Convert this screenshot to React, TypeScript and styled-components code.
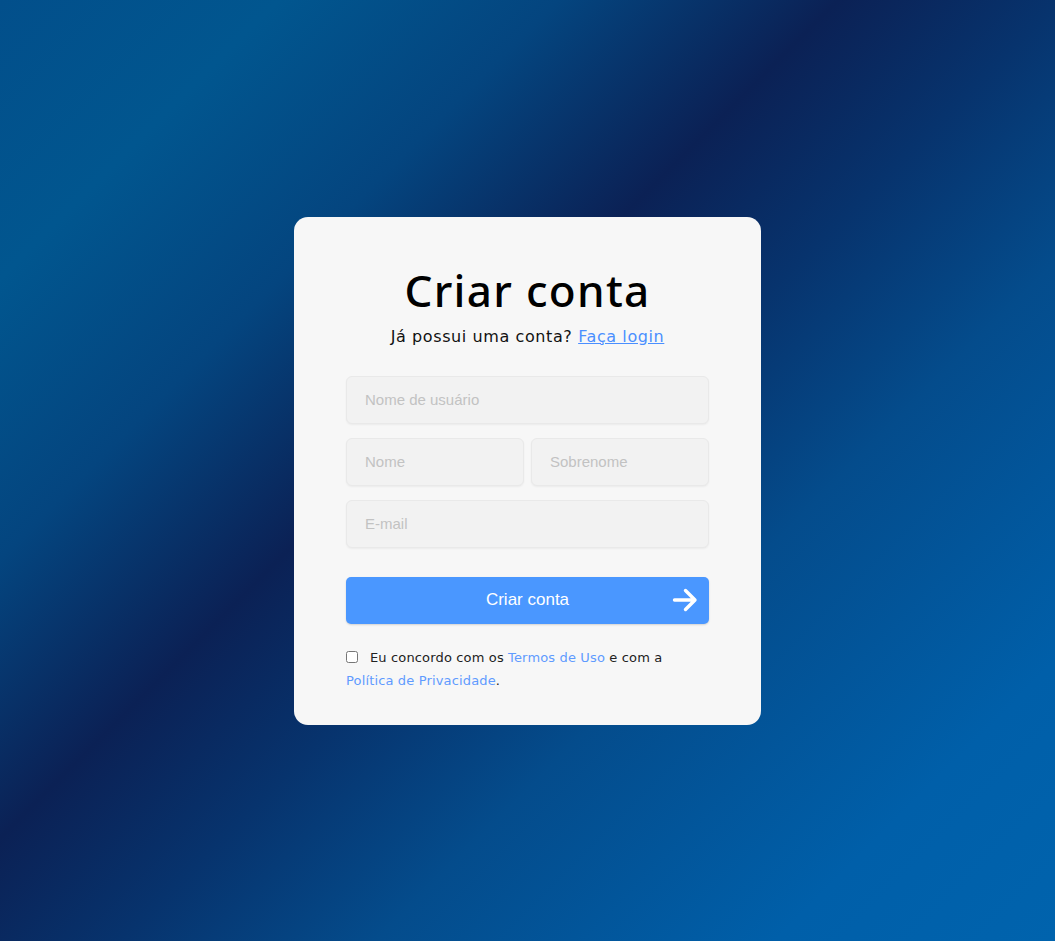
import React from "react";
import styled, { createGlobalStyle } from "styled-components";

const GlobalStyle = createGlobalStyle`
  * {
    box-sizing: border-box;
  }
  html, body, #root {
    margin: 0;
    padding: 0;
    height: 100%;
  }
  body {
    font-family: "DejaVu Sans", "Noto Sans", sans-serif;
  }
`

const Page = styled.div`
  min-height: 100vh;
  display: flex;
  align-items: center;
  justify-content: center;
  background: linear-gradient(
    135deg,
    #024f8b 0%,
    #01568f 14%,
    #04457f 28%,
    #0b2155 42%,
    #07336d 53%,
    #044c8c 66%,
    #005fa9 86%,
    #0063ad 100%
  );
`

const Card = styled.div`
  width: 467px;
  background-color: #f7f7f7;
  border-radius: 14px;
  padding: 44px 52px 33px;
  display: flex;
  flex-direction: column;
`

const Title = styled.h1`
  margin: 0;
  font-family: "Noto Sans", sans-serif;
  font-weight: 500;
  font-size: 44px;
  line-height: 58px;
  letter-spacing: 1.3px;
  text-align: center;
  color: #000;
`

const Subtitle = styled.p`
  margin: 6px 0 27px;
  font-family: "DejaVu Sans", sans-serif;
  font-size: 16px;
  line-height: 24px;
  letter-spacing: 0.6px;
  text-align: center;
  color: #111;
`

const LoginLink = styled.a`
  color: #4a8fff;
  text-decoration: underline;
  cursor: pointer;
`

const Fields = styled.div`
  display: flex;
  flex-direction: column;
  gap: 14px;
`

const Row = styled.div`
  display: flex;
  gap: 7px;
`

const Input = styled.input`
  flex: 1 1 0;
  min-width: 0;
  width: 100%;
  height: 48px;
  padding: 0 18px;
  border: 1px solid #e9e9e9;
  border-radius: 6px;
  background-color: #f2f2f2;
  box-shadow: 0 1px 2px rgba(0, 0, 0, 0.05);
  font-family: "Liberation Sans", Arial, sans-serif;
  font-size: 15px;
  color: #333;
  outline: none;

  &::placeholder {
    color: #c2c2c2;
  }
`

const FullInput = styled(Input)`
  flex: none;
`

const SubmitButton = styled.button`
  position: relative;
  margin-top: 29px;
  height: 47px;
  width: 100%;
  border: 0;
  border-radius: 5px;
  background-color: #4a97ff;
  box-shadow: 0 1px 2px rgba(0, 0, 0, 0.15);
  color: #fff;
  font-family: "Liberation Sans", Arial, sans-serif;
  font-size: 17px;
  cursor: pointer;
  display: flex;
  align-items: center;
  justify-content: center;
`

const ArrowIcon = styled.svg`
  position: absolute;
  right: 11px;
  top: 50%;
  transform: translateY(-50%);
`

const Terms = styled.div`
  margin-top: 22px;
  font-family: "DejaVu Sans", sans-serif;
  font-size: 13px;
  line-height: 23px;
  letter-spacing: 0.15px;
  color: #222;
`

const Checkbox = styled.input`
  width: 12px;
  height: 12px;
  margin: 0 12px 0 0;
  vertical-align: -1px;
`

const TermsLink = styled.a`
  color: #5f9bff;
  text-decoration: none;
  cursor: pointer;
`

export default function App() {
  return (
    <>
      <GlobalStyle />
      <Page>
        <Card>
          <Title>Criar conta</Title>
          <Subtitle>
            Já possui uma conta? <LoginLink>Faça login</LoginLink>
          </Subtitle>
          <Fields>
            <FullInput placeholder="Nome de usuário" />
            <Row>
              <Input placeholder="Nome" />
              <Input placeholder="Sobrenome" />
            </Row>
            <FullInput placeholder="E-mail" />
          </Fields>
          <SubmitButton>
            Criar conta
            <ArrowIcon width="26" height="26" viewBox="0 0 26 26" fill="none">
              <path
                d="M2.5 13h20M13.5 3.5l9.5 9.5-9.5 9.5"
                stroke="#fff"
                strokeWidth="3.4"
                strokeLinecap="round"
                strokeLinejoin="round"
              />
            </ArrowIcon>
          </SubmitButton>
          <Terms>
            <Checkbox type="checkbox" />
            Eu concordo com os <TermsLink>Termos de Uso</TermsLink> e com a{" "}
            <TermsLink>Política de Privacidade</TermsLink>.
          </Terms>
        </Card>
      </Page>
    </>
  );
}
